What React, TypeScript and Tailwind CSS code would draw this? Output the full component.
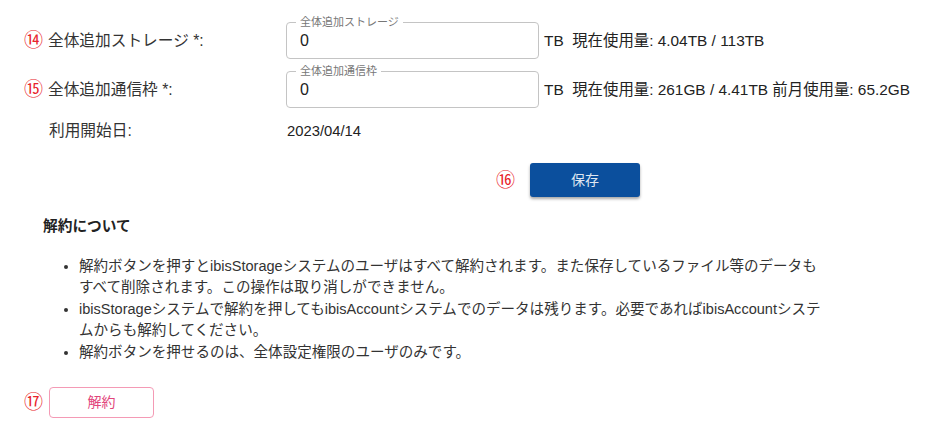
import React from "react";

const font = { fontFamily: '"Liberation Sans", "Noto Sans CJK JP", sans-serif' };

function Field({ legend }: { legend: string }) {
  return (
    <div className="relative w-[253px] h-[37px] rounded-[4px] border border-[#c4c4c4] flex items-center pl-[13px]">
      <span className="absolute -top-[8px] left-[9px] px-[4px] bg-white text-[11px] leading-[14px] text-[#777]">
        {legend}
      </span>
      <span className="text-[16px] text-[#222]">0</span>
    </div>
  );
}

function Num({ n }: { n: string }) {
  return <span className="w-[24px] -ml-[1px] text-[19px] text-[#e8232b] leading-none">{n}</span>;
}

export default function App() {
  return (
    <div className="w-[929px] h-[443px] bg-white text-[#333] relative overflow-hidden" style={font}>
      <div className="pt-[22px] pl-[25px] flex flex-col">
        <div className="flex items-center h-[37px]">
          <Num n="⑭" />
          <span className="w-[238px] text-[15.7px]">全体追加ストレージ *:</span>
          <Field legend="全体追加ストレージ" />
          <span className="ml-[5px] text-[15.4px] text-[#222]">TB&nbsp; 現在使用量: 4.04TB / 113TB</span>
        </div>
        <div className="flex items-center h-[37px] mt-[12px]">
          <Num n="⑮" />
          <span className="w-[238px] text-[15.7px]">全体追加通信枠 *:</span>
          <Field legend="全体追加通信枠" />
          <span className="ml-[5px] text-[15.4px] text-[#222]">TB&nbsp; 現在使用量: 261GB / 4.41TB 前月使用量: 65.2GB</span>
        </div>
        <div className="flex items-center h-[20px] mt-[13px]">
          <span className="w-[24px]" />
          <span className="w-[238px] text-[15.7px]">利用開始日:</span>
          <span className="text-[14.8px] text-[#222]">2023/04/14</span>
        </div>
      </div>
      <div className="flex items-center mt-[22px] pl-[496px]">
        <span className="w-[34px] text-[19px] text-[#e8232b] leading-none">⑯</span>
        <button className="w-[110px] h-[34px] rounded-[3px] bg-[#0b4f9d] text-[#dfe7f1] text-[14px] shadow-[0_2px_3px_rgba(0,0,0,0.35)]">
          保存
        </button>
      </div>
      <div className="pl-[43px] mt-[19px] text-[14.7px] font-bold leading-[20px] text-[#222]">解約について</div>
      <ul className="mt-[20px] pl-[79px] list-disc text-[14.55px] leading-[21px] text-[#333] marker:text-[#333]">
        <li className="mb-[1px]">
          解約ボタンを押すとibisStorageシステムのユーザはすべて解約されます。また保存しているファイル等のデータも
          <br />
          すべて削除されます。この操作は取り消しができません。
        </li>
        <li className="mb-[1px]">
          ibisStorageシステムで解約を押してもibisAccountシステムでのデータは残ります。必要であればibisAccountシステ
          <br />
          ムからも解約してください。
        </li>
        <li>解約ボタンを押せるのは、全体設定権限のユーザのみです。</li>
      </ul>
      <div className="flex items-center mt-[24px] pl-[25px]">
        <span className="w-[24px] -ml-[1px] text-[19px] text-[#e8232b] leading-none">⑰</span>
        <button className="w-[105px] h-[31px] ml-[1px] rounded-[4px] border border-[#f49ab5] text-[#e2457b] text-[14px] bg-white">
          解約
        </button>
      </div>
    </div>
  );
}
